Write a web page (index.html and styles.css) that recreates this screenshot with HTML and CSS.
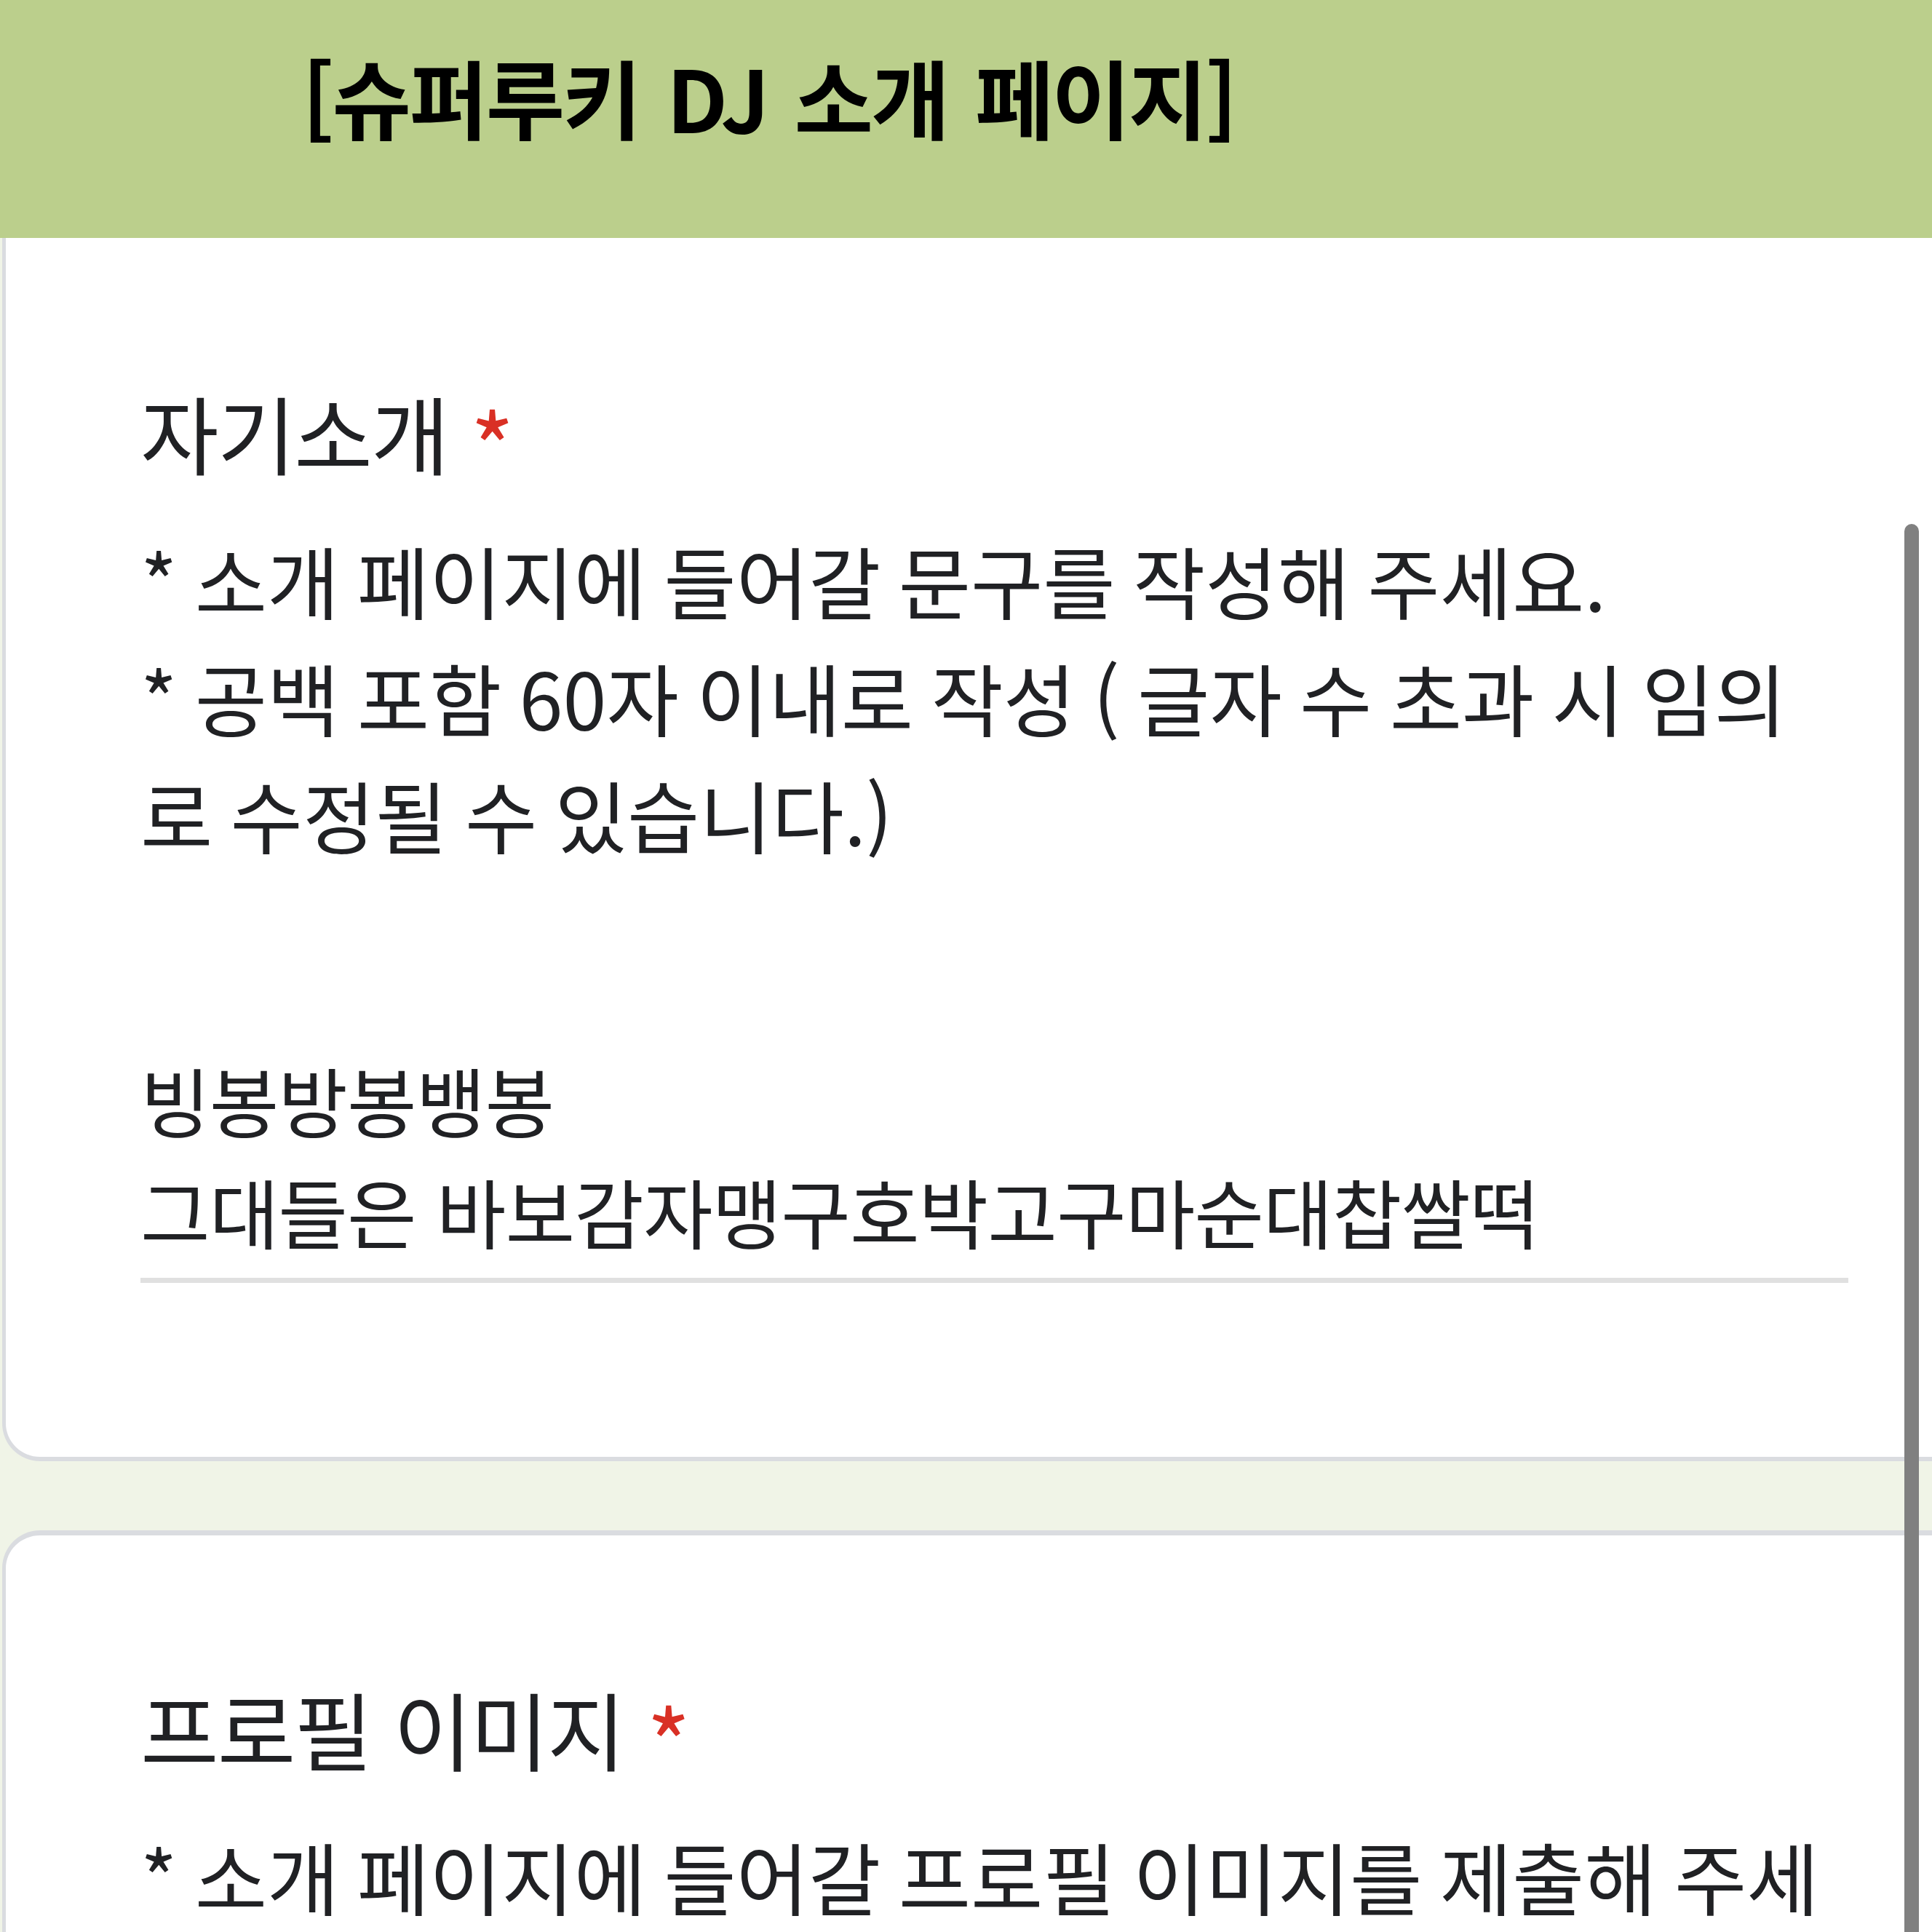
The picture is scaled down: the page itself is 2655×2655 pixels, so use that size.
FILE: index.html
```html
<!DOCTYPE html>
<html lang="ko">
<head>
<meta charset="utf-8">
<title>슈퍼루키 DJ 소개 페이지</title>
<link rel="stylesheet" href="styles.css">
</head>
<body>
<div class="page">
  <header class="form-header">
    <h1 class="form-title">[슈퍼루키 DJ 소개 페이지]</h1>
  </header>
  <section class="card card-first">
    <h2 class="q-title">자기소개 <span class="req">*</span></h2>
    <p class="q-desc">* 소개 페이지에 들어갈 문구를 작성해 주세요.<br>* 공백 포함 60자 이내로 작성 ( 글자 수 초과 시 임의로 수정될 수 있습니다.)</p>
    <div class="answer">빙봉방봉뱅봉<br>그대들은 바보감자맹구호박고구마순대찹쌀떡</div>
  </section>
  <section class="card card-second">
    <h2 class="q-title">프로필 이미지 <span class="req">*</span></h2>
    <p class="q-desc">* 소개 페이지에 들어갈 프로필 이미지를 제출해 주세요.</p>
  </section>
  <div class="scrollbar"></div>
</div>
</body>
</html>
```
FILE: styles.css
```css
html, body {
  margin: 0;
  padding: 0;
}
body {
  background: #f0f4e7;
  font-family: "Noto Sans CJK KR", "Noto Sans", sans-serif;
  color: #202124;
}
.page {
  position: relative;
  width: 2655px;
  height: 2655px;
  overflow: hidden;
}
.form-header {
  box-sizing: border-box;
  height: 327px;
  background: #bbcf8c;
  padding: 62px 0 0 415px;
}
.form-title {
  margin: 0;
  font-size: 118px;
  line-height: 140px;
  font-weight: 700;
  letter-spacing: -3px;
  word-spacing: 7px;
  color: #000;
}
.card {
  background: #fff;
  margin-left: 3px;
  border-left: 5px solid #dadce0;
  padding: 0 115px 0 185px;
}
.card-first {
  padding-top: 196px;
  padding-bottom: 239px;
  border-bottom: 6px solid #dadce0;
  border-bottom-left-radius: 52px;
}
.card-second {
  margin-top: 95px;
  padding-top: 194px;
  border-top: 7px solid #dadce0;
  border-top-left-radius: 52px;
}
.q-title {
  margin: 0;
  font-size: 117px;
  line-height: 140px;
  font-weight: 400;
  letter-spacing: -2px;
}
.req {
  color: #d93025;
  font-size: 130px;
  line-height: 0;
  vertical-align: -22px;
}
.q-desc {
  margin: 53px 0 0;
  font-size: 108px;
  line-height: 161px;
  letter-spacing: 0;
  word-spacing: -6px;
}
.answer {
  margin-top: 235px;
  font-size: 104px;
  line-height: 153px;
  letter-spacing: -1px;
  padding-bottom: 16px;
  border-bottom: 7px solid #e0e0e0;
}
.scrollbar {
  position: absolute;
  left: 2617px;
  top: 720px;
  width: 20px;
  height: 2000px;
  border-radius: 10px;
  background: #808080;
}
```
